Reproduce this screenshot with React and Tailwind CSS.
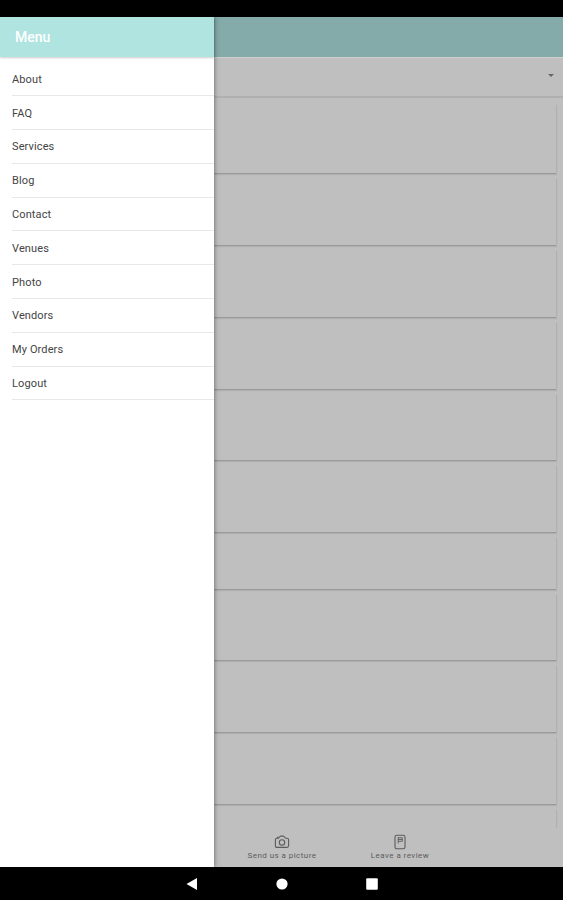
import React, { useState } from 'react';

const menuItems = ['About', 'FAQ', 'Services', 'Blog', 'Contact', 'Venues', 'Photo', 'Vendors', 'My Orders', 'Logout'];

// One card is shorter than the rest
const cards = [
    { id: 1, height: 'h-[70px]' },
    { id: 2, height: 'h-[68px]' },
    { id: 3, height: 'h-[68px]' },
    { id: 4, height: 'h-[68px]' },
    { id: 5, height: 'h-[67px]' },
    { id: 6, height: 'h-[68px]' },
    { id: 7, height: 'h-[53px]' },
    { id: 8, height: 'h-[67px]' },
    { id: 9, height: 'h-[68px]' },
    { id: 10, height: 'h-[68px]' },
    { id: 11, height: 'h-[68px]' },
];

const CameraIcon = () => (
    <svg width="16" height="14" viewBox="0 0 16 14" fill="none" stroke="#5c5c5c" strokeWidth="1.1" strokeLinejoin="round">
        <path d="M3 3.2h1.5l1.4-1.7q.3-.4.8-.4h2.6q.5 0 .8.4l1.4 1.7H13q1.6 0 1.6 1.6v6q0 1.6-1.6 1.6H3q-1.6 0-1.6-1.6v-6Q1.4 3.2 3 3.2Z" />
        <circle cx="8" cy="7.5" r="2.7" />
        <path d="M3.4 3V2.3h1.2" />
    </svg>
);

const ReviewIcon = () => (
    <svg width="12" height="16" viewBox="0 0 12 16" fill="none" stroke="#5c5c5c" strokeWidth="1.1">
        <rect x="1" y="1.2" width="10" height="13.6" rx="1.8" />
        <path d="M4 3.7h4.3v3.6H4M4 5.5h4.3M4.2 3.2v6.3" strokeWidth=".9" />
    </svg>
);

const App = () => {
    const [active, setActive] = useState(null);

    return (
        <div className="w-[563px] h-[900px] flex flex-col overflow-hidden bg-black font-['Roboto',sans-serif]">
            {/* Status bar */}
            <div className="h-[17px] shrink-0 bg-black"></div>

            <div className="h-[850px] flex">
                {/* Drawer */}
                <aside className="relative z-10 w-[214px] shrink-0 bg-white shadow-[0_0_5px_rgba(0,0,0,0.5)]">
                    <header className="h-10 pl-[15px] flex items-center bg-[#b0e4e1] shadow-[0_1px_2px_rgba(0,0,0,0.2)]">
                        <h1 className="text-[14px] leading-none font-medium text-white">Menu</h1>
                    </header>
                    <ul className="pl-3 pt-[5.4px]">
                        {menuItems.map((item) => (
                            <li key={item} className="h-[33.8px] border-b border-[#e8e8e8]">
                                <button
                                    onClick={() => setActive(item)}
                                    aria-current={active === item}
                                    className="w-full h-full pt-px flex items-center text-left text-[11px] leading-none tracking-[0.12px] text-[#444]"
                                >
                                    {item}
                                </button>
                            </li>
                        ))}
                    </ul>
                </aside>

                {/* Dimmed page */}
                <main className="flex-1 flex flex-col bg-[#bfbfbf]">
                    <div className="h-10 shrink-0 bg-[#84aba9] shadow-[0_1px_1px_rgba(255,255,255,0.25)]"></div>
                    <div className="h-[41px] shrink-0 pr-[9px] pb-[3px] flex items-center justify-end border-b-2 border-[#b0b0b0]">
                        <svg width="6" height="3" viewBox="0 0 6 3" fill="#666"><path d="M0 0h6L3 3Z" /></svg>
                    </div>
                    <div className="flex-1 overflow-hidden pt-[6px] pr-[7px] flex flex-col gap-1">
                        {cards.map((card) => (
                            <div key={card.id} className={`${card.height} shrink-0 border-b-[1.5px] border-b-[#999] shadow-[1px_1px_1px_rgba(0,0,0,0.08)]`}></div>
                        ))}
                    </div>
                    <nav className="h-[39px] shrink-0 pl-[9px] flex text-[8px] leading-none tracking-[0.45px] text-[#5c5c5c]">
                        <button className="w-[118px] pt-[5px] flex flex-col items-center">
                            <span className="h-[17px] flex items-center"><CameraIcon /></span>
                            <span className="mt-[2px]">Send us a picture</span>
                        </button>
                        <button className="w-[118px] pt-[5px] flex flex-col items-center">
                            <span className="h-[17px] flex items-center"><ReviewIcon /></span>
                            <span className="mt-[2px]">Leave a review</span>
                        </button>
                    </nav>
                </main>
            </div>

            {/* Android navigation */}
            <div className="h-[33px] shrink-0 flex items-center justify-center gap-[78px] bg-black">
                <svg width="12" height="14" viewBox="0 0 12 14" fill="white"><path d="M11 1v12L.5 7Z" /></svg>
                <svg width="12" height="12" viewBox="0 0 12 12" fill="white"><circle cx="6" cy="6" r="5.6" /></svg>
                <svg width="12" height="12" viewBox="0 0 12 12" fill="white"><rect x=".2" y=".2" width="11.6" height="11.6" rx="1" /></svg>
            </div>
        </div>
    );
};

export default App;
